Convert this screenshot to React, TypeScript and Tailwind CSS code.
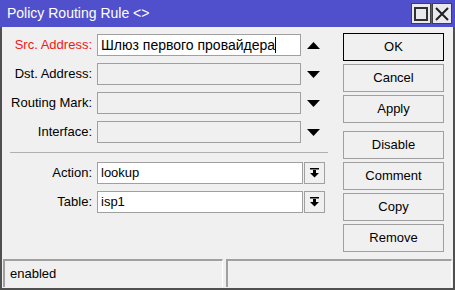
import React from 'react';

const font = { fontFamily: '"Liberation Sans", Arial, sans-serif' };

const DropIcon = () => (
  <svg width="9" height="10" viewBox="0 0 9 10">
    <rect x="0" y="0" width="9" height="1.5" fill="#000" />
    <rect x="3" y="2" width="3" height="3" fill="#000" />
    <polygon points="0,5 9,5 4.5,9.5" fill="#000" />
  </svg>
);

const Triangle = ({ up }: { up?: boolean }) => (
  <svg width="13" height="7" viewBox="0 0 13 7">
    {up ? <polygon points="0,7 13,7 6.5,0" fill="#000" /> : <polygon points="0,0 13,0 6.5,7" fill="#000" />}
  </svg>
);

const fields = [
  { label: 'Src. Address:', value: 'Шлюз первого провайдера', red: true, up: true },
  { label: 'Dst. Address:', value: '' },
  { label: 'Routing Mark:', value: '' },
  { label: 'Interface:', value: '' },
];

const combos = [
  { label: 'Action:', value: 'lookup' },
  { label: 'Table:', value: 'isp1' },
];

const buttons = [
  ['OK', 'Cancel', 'Apply'],
  ['Disable', 'Comment', 'Copy', 'Remove'],
];

export default function App() {
  return (
    <div className="w-[455px] h-[290px] flex flex-col bg-[#f0f0f0] text-[13px] text-black" style={font}>
      <div className="h-[27px] bg-[#5050cc] flex items-center pl-[7px] pr-[3px] shrink-0">
        <span className="text-white text-[14px] flex-1">Policy Routing Rule &lt;&gt;</span>
        <div className="flex gap-px">
          <div className="w-[20px] h-[21px] bg-[#e8e8ee] border border-[#404040] flex items-center justify-center">
            <div className="w-[14px] h-[14px] border-2 border-[#303030]" />
          </div>
          <div className="w-[20px] h-[21px] bg-[#e8e8ee] border border-[#404040] flex items-center justify-center">
            <svg width="14" height="14" viewBox="0 0 14 14">
              <path d="M1 1 L13 13 M13 1 L1 13" stroke="#202020" strokeWidth="2" />
            </svg>
          </div>
        </div>
      </div>
      <div className="flex-1 flex flex-col border-l-2 border-r-2 border-b-2 border-[#505050]">
        <div className="flex flex-1">
          <div className="w-[327px] pt-[7px] flex flex-col">
            <div className="flex flex-col gap-[7px]">
              {fields.map((f) => (
                <div key={f.label} className="flex items-center h-[22px]">
                  <div className={`w-[90px] text-right ${f.red ? 'text-[#f01818]' : ''}`}>{f.label}</div>
                  <div
                    className={`ml-[5px] w-[204px] h-[22px] border border-[#a0a0a0] flex items-center px-[3px] text-[14px] ${
                      f.value ? 'bg-white' : 'bg-[#f0f0f0]'
                    }`}
                  >
                    {f.value}
                    {f.value && <span className="w-px h-[16px] bg-black" />}
                  </div>
                  <div className="ml-[6px] flex items-center">
                    <Triangle up={f.up} />
                  </div>
                </div>
              ))}
            </div>
            <div className="ml-[8px] mr-[1px] mt-[9px] mb-[9px] h-px bg-[#b0b0b0]" />
            <div className="flex flex-col gap-[7px]">
              {combos.map((c) => (
                <div key={c.label} className="flex items-center h-[22px]">
                  <div className="w-[90px] text-right">{c.label}</div>
                  <div className="ml-[5px] w-[206px] h-[22px] border border-[#a0a0a0] bg-white flex items-center px-[3px]">
                    {c.value}
                  </div>
                  <div className="ml-px w-[21px] h-[22px] border border-[#a0a0a0] bg-[#f0f0f0] flex items-center justify-center">
                    <DropIcon />
                  </div>
                </div>
              ))}
            </div>
          </div>
          <div className="ml-[14px] pt-[6px] flex flex-col gap-[8px]">
            {buttons.map((group, gi) => (
              <div key={gi} className="flex flex-col gap-[3px]">
                {group.map((b) => (
                  <div
                    key={b}
                    className={`w-[101px] h-[28px] flex items-center justify-center bg-[#f0f0f0] border ${
                      b === 'OK' ? 'border-black' : 'border-[#a0a0a0]'
                    }`}
                  >
                    {b}
                  </div>
                ))}
              </div>
            ))}
          </div>
        </div>
        <div className="h-[29px] flex gap-[3px] px-px pb-px shrink-0">
          <div className="w-[220px] border-t-2 border-l-2 border-[#a0a0a0] border-r border-r-[#ffffff] flex items-center pl-[5px]">
            enabled
          </div>
          <div className="flex-1 border-t-2 border-l-2 border-[#a0a0a0] border-r border-r-[#ffffff]" />
        </div>
      </div>
    </div>
  );
}
